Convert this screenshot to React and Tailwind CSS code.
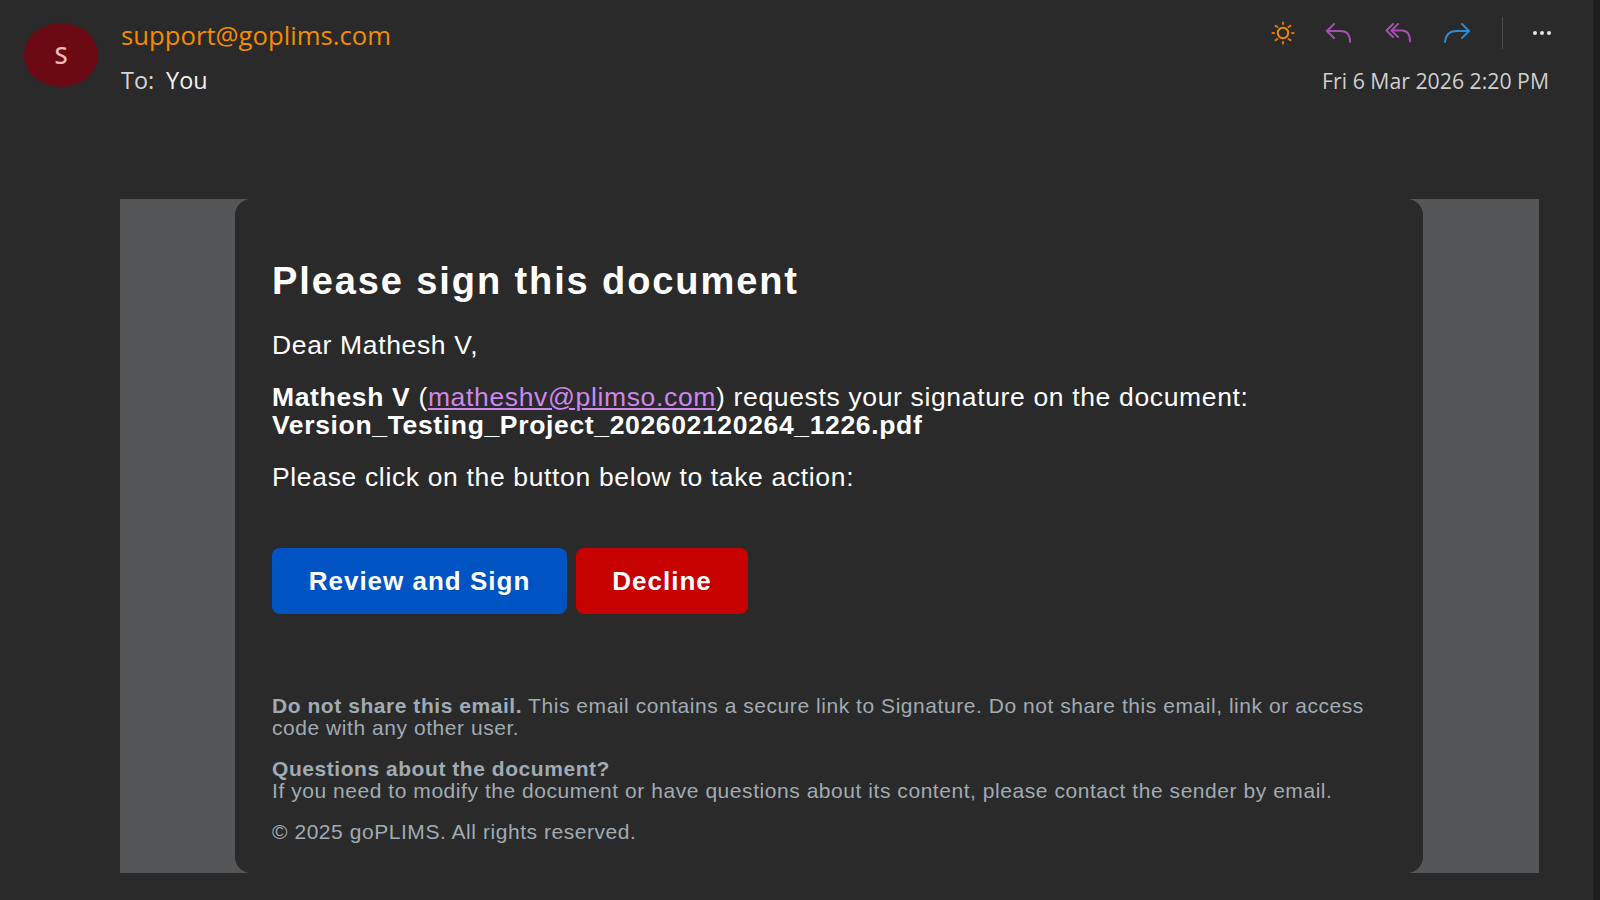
import React from "react";

const Sun = () => (
  <svg width="28" height="28" viewBox="0 0 28 28" fill="none" stroke="#e8730c" strokeWidth="2" strokeLinecap="round">
    <circle cx="14" cy="14" r="5.2" stroke="#e88a0c" />
    <path d="M14 3.5v1.5M14 23v1.5M3.5 14H5M23 14h1.5M6.6 6.8l1.9 1.2M21.4 6.8l-1.9 1.2M6.6 21.2l1.9-1.2M21.4 21.2l-1.9-1.2" />
  </svg>
);
const Reply = () => (
  <svg width="28" height="22" viewBox="0 0 28 22" fill="none" stroke="#a350ae" strokeWidth="2" strokeLinecap="round" strokeLinejoin="round">
    <path d="M9 2 2 9l7 7" />
    <path d="M2 9h14c5 0 9 3 9 11" />
  </svg>
);
const ReplyAll = () => (
  <svg width="28" height="22" viewBox="0 0 28 22" fill="none" stroke="#a350ae" strokeWidth="2" strokeLinecap="round" strokeLinejoin="round">
    <path d="M8 2 1.500 8.500 8 15" />
    <path d="M13 2 6.500 8.500 13 15" />
    <path d="M7 8.500h10c5 0 8 3 8 11" />
  </svg>
);
const Forward = () => (
  <svg width="28" height="22" viewBox="0 0 28 22" fill="none" stroke="#2f88d0" strokeWidth="2" strokeLinecap="round" strokeLinejoin="round">
    <path d="M19 2l7 7-7 7" />
    <path d="M26 9H13C7 9 3 12 2 20" />
  </svg>
);

export default function App() {
  return (
    <div className="w-[1600px] h-[900px] overflow-hidden flex bg-[#2a2a2a] font-['Liberation_Sans',sans-serif]">
      <div className="w-[1593px] flex flex-col">
        <header className="h-[199px] flex pl-6 pr-[44px] pt-[23px]">
          <div className="w-[74px] h-16 rounded-[50%] bg-[#6b0a12] text-[#f2b8bd] flex items-center justify-center text-[24px] font-['Noto_Sans',sans-serif] font-medium">
            S
          </div>
          <div className="ml-[23px] flex flex-col font-['Open_Sans',sans-serif]">
            <div className="text-[25.7px] leading-[32px] -mt-[3px] text-[#f28c00] font-medium">support@goplims.com</div>
            <div className="mt-[13px] text-[23.4px] leading-[30px] text-[#d6d6d6]">
              To:<span className="ml-3 text-[#f2f2f2]">You</span>
            </div>
          </div>
          <div className="ml-auto flex flex-col items-end font-['Open_Sans',sans-serif]">
            <div className="flex items-center h-[34px] -mt-[7px] -mr-[2px]">
              <Sun />
              <div className="w-7 ml-[28px]"><Reply /></div>
              <div className="w-7 ml-[32px]"><ReplyAll /></div>
              <div className="w-7 ml-[30px]"><Forward /></div>
              <div className="w-px h-8 bg-[#4d4d4d] ml-[31px]" />
              <div className="flex gap-[3px] ml-[30px]">
                <span className="w-1 h-1 rounded-full bg-[#e6e6e6]" />
                <span className="w-1 h-1 rounded-full bg-[#e6e6e6]" />
                <span className="w-1 h-1 rounded-full bg-[#e6e6e6]" />
              </div>
            </div>
            <div className="mt-[17px] text-[21.25px] leading-[28px] text-[#cfcfcf]">Fri 6 Mar 2026 2:20 PM</div>
          </div>
        </header>
        <div className="ml-[120px] w-[1419px] h-[674px] bg-[#555658] pl-[115px] pr-[116px]">
          <main className="h-full rounded-[16px] bg-[#2a2a2a] pl-[37px] pr-[38px] pt-[56px] text-white">
            <h1 className="text-[38px] leading-[52px] font-bold tracking-[1.9px]">Please sign this document</h1>
            <div className="text-[26.5px] leading-[28px] tracking-[0.65px]">
              <p className="mt-[24px]">Dear Mathesh V,</p>
              <p className="mt-[24px]">
                <b>Mathesh V</b> (<span className="text-[#cf86ee] underline">matheshv@plimso.com</span>) requests your signature on the document:
                <br />
                <b>Version_Testing_Project_202602120264_1226.pdf</b>
              </p>
              <p className="mt-[24px]">Please click on the button below to take action:</p>
            </div>
            <div className="mt-[57px] flex gap-[9px]">
              <div className="w-[295px] h-[66px] rounded-lg bg-[#0053c2] flex items-center justify-center text-[26px] tracking-[1px] font-bold">Review and Sign</div>
              <div className="w-[172px] h-[66px] rounded-lg bg-[#c70000] flex items-center justify-center text-[26px] tracking-[1px] font-bold">Decline</div>
            </div>
            <div className="mt-[81px] text-[21px] leading-[22px] tracking-[0.55px] text-[#a0abb3]">
              <p><b>Do not share this email.</b> This email contains a secure link to Signature. Do not share this email, link or access code with any other user.</p>
              <p className="mt-[19px]"><b>Questions about the document?</b><br />If you need to modify the document or have questions about its content, please contact the sender by email.</p>
              <p className="mt-[19px]">© 2025 goPLIMS. All rights reserved.</p>
            </div>
          </main>
        </div>
      </div>
      <div className="w-[7px] bg-[#1e1e1e]" />
    </div>
  );
}
